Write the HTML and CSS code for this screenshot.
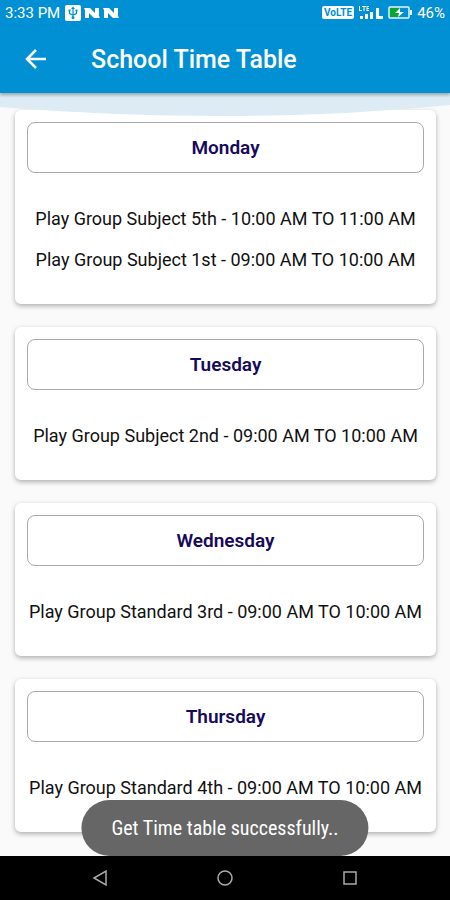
FILE: index.html
```html
<!DOCTYPE html>
<html lang="en">
<head>
  <meta charset="UTF-8">
  <meta name="viewport" content="width=device-width, initial-scale=1">
  <title>School Time Table</title>
  <link rel="stylesheet" href="styles.css">
</head>
<body>
  <header class="top">
    <div class="status">
      <span>3:33 PM</span>
      <svg class="status-left" width="56" height="16" viewBox="0 0 56 16" fill="#fff">
        <rect x="1" y="0" width="16" height="16" rx="2"/>
        <path d="M9 3v9M5.500 6v2.500L9 10l3.500-1.500V6" fill="none" stroke="#0290d5" stroke-width="1.200"/>
        <path d="M9 1.500l-2 2.500h4zM4.500 4.500h2v2h-2zM11.500 4.500h2v2h-2z" fill="#0290d5"/>
        <circle cx="9" cy="12.500" r="1.500" fill="#0290d5"/>
        <path d="M21 13V5l-1-2h6l5 5V3h4v8l1 2h-6l-5-5v5z"/>
        <path d="M40 13V5l-1-2h6l5 5V3h4v8l1 2h-6l-5-5v5z"/>
      </svg>
      <span class="volte">VoLTE</span>
      <svg width="26" height="14" viewBox="0 0 26 14" fill="#fff">
        <path d="M1 0h1v4h2v1H1zM4 0h4v1H6.500v4h-1V1H4zM8.500 0H11v1H9.500v1H11v1H9.500v1H11v1H8.500z"/>
        <path d="M2 10h3v3H2zM7 8h3v5H7zM12 6h3v7h-3zM18 2h3v8h4v3h-7z"/>
      </svg>
      <svg width="25" height="13" viewBox="0 0 25 13">
        <rect x="1" y="1" width="20" height="11" rx="1" fill="none" stroke="#e6f5fc" stroke-width="1.500"/>
        <path d="M22 4h2v5h-2z" fill="#e6f5fc"/>
        <path d="M2 2h9v9H2z" fill="#0aa52c"/>
        <path d="M12 2L7 7h4l-1 4 6-5h-4z" fill="#fff"/>
      </svg>
      <span class="battery">46%</span>
    </div>
    <div class="appbar">
      <button class="back" type="button" aria-label="Back">
        <svg width="22" height="20" viewBox="0 0 22 20" fill="none" stroke="#fff" stroke-width="2.500">
          <path d="M21 10H3M11 1L2 10l9 9"/>
        </svg>
      </button>
      <h1>School Time Table</h1>
    </div>
    <svg class="wave" viewBox="0 0 450 24" preserveAspectRatio="none">
      <path d="M0 0H450V12Q340 23 225 23Q110 23 0 14Z" fill="#dcebf4"/>
    </svg>
  </header>

  <main class="days">
    <section class="card">
      <h2>Monday</h2>
      <ul>
        <li>Play Group Subject 5th - 10:00 AM TO 11:00 AM</li>
        <li>Play Group Subject 1st - 09:00 AM TO 10:00 AM</li>
      </ul>
    </section>
    <section class="card">
      <h2>Tuesday</h2>
      <ul>
        <li>Play Group Subject 2nd - 09:00 AM TO 10:00 AM</li>
      </ul>
    </section>
    <section class="card">
      <h2>Wednesday</h2>
      <ul>
        <li>Play Group Standard 3rd - 09:00 AM TO 10:00 AM</li>
      </ul>
    </section>
    <section class="card">
      <h2>Thursday</h2>
      <ul>
        <li>Play Group Standard 4th - 09:00 AM TO 10:00 AM</li>
      </ul>
    </section>
  </main>

  <footer class="bottom">
    <div class="toast" role="status">Get Time table successfully..</div>
    <nav class="navbar">
      <button type="button" aria-label="Back">
        <svg width="16" height="18" viewBox="0 0 16 18"><path d="M14 2v14L2 9z"/></svg>
      </button>
      <button type="button" aria-label="Home">
        <svg width="18" height="18" viewBox="0 0 18 18"><circle cx="9" cy="9" r="7"/></svg>
      </button>
      <button type="button" aria-label="Recent apps">
        <svg width="16" height="16" viewBox="0 0 16 16"><rect x="2" y="2" width="12" height="12"/></svg>
      </button>
    </nav>
  </footer>
</body>
</html>
```

FILE: styles.css
```css
* {
  box-sizing: border-box;
}

body {
  margin: 0;
  min-height: 100vh;
  display: flex;
  flex-direction: column;
  font-family: Roboto, sans-serif;
  background: #fafafa;
}

h1, h2, ul {
  margin: 0;
  padding: 0;
}

button {
  padding: 0;
  border: none;
  background: none;
  display: flex;
  cursor: pointer;
}

.top {
  position: sticky;
  top: 0;
  z-index: 1;
  background: #0290d5;
  color: #fff;
}

.status {
  display: flex;
  align-items: center;
  gap: 4px;
  height: 25px;
  padding: 0 5px;
  font-size: 15px;
}

.status-left {
  margin-right: auto;
}

.volte {
  padding: 0 2px;
  border-radius: 2px;
  background: #fff;
  color: #0290d5;
  font-size: 10px;
  line-height: 13px;
  font-weight: 700;
}

.appbar {
  display: flex;
  align-items: center;
  gap: 44px;
  height: 68px;
  padding: 0 25px;
  box-shadow: 0 2px 3px rgba(0, 0, 0, 0.3);
}

.appbar h1 {
  font-size: 25px;
  font-weight: 500;
}

/* curved strip that hangs over the first card */
.wave {
  position: absolute;
  top: 100%;
  left: 0;
  z-index: -1;
  width: 100%;
  height: 24px;
}

.days {
  flex: 1;
  display: flex;
  flex-direction: column;
  gap: 23px;
  padding: 17px 14px 24px 15px;
}

.card {
  padding: 12px;
  border-radius: 6px;
  background: #fff;
  box-shadow: 0 2px 5px rgba(0, 0, 0, 0.3);
}

.card h2 {
  border: 1px solid #a9a9b0;
  border-radius: 8px;
  color: #160a5c;
  font-size: 19px;
  font-weight: 600;
  line-height: 49px;
  text-align: center;
}

.card ul {
  padding: 25px 0 12px;
  list-style: none;
}

.card li {
  color: #111;
  font-size: 18px;
  line-height: 41px;
  text-align: center;
}

.bottom {
  position: sticky;
  bottom: 0;
}

.toast {
  position: absolute;
  bottom: 100%;
  left: 50%;
  transform: translateX(-50%);
  padding: 0 30px;
  border-radius: 28px;
  background: #666;
  color: #fff;
  font-family: "Roboto Condensed", Roboto, sans-serif;
  font-size: 20px;
  line-height: 56px;
  white-space: nowrap;
}

.navbar {
  display: flex;
  align-items: center;
  justify-content: space-between;
  height: 44px;
  padding: 0 20.5%;
  background: #000;
}

.navbar svg {
  fill: none;
  stroke: #aaa;
  stroke-width: 1.5;
}
```
